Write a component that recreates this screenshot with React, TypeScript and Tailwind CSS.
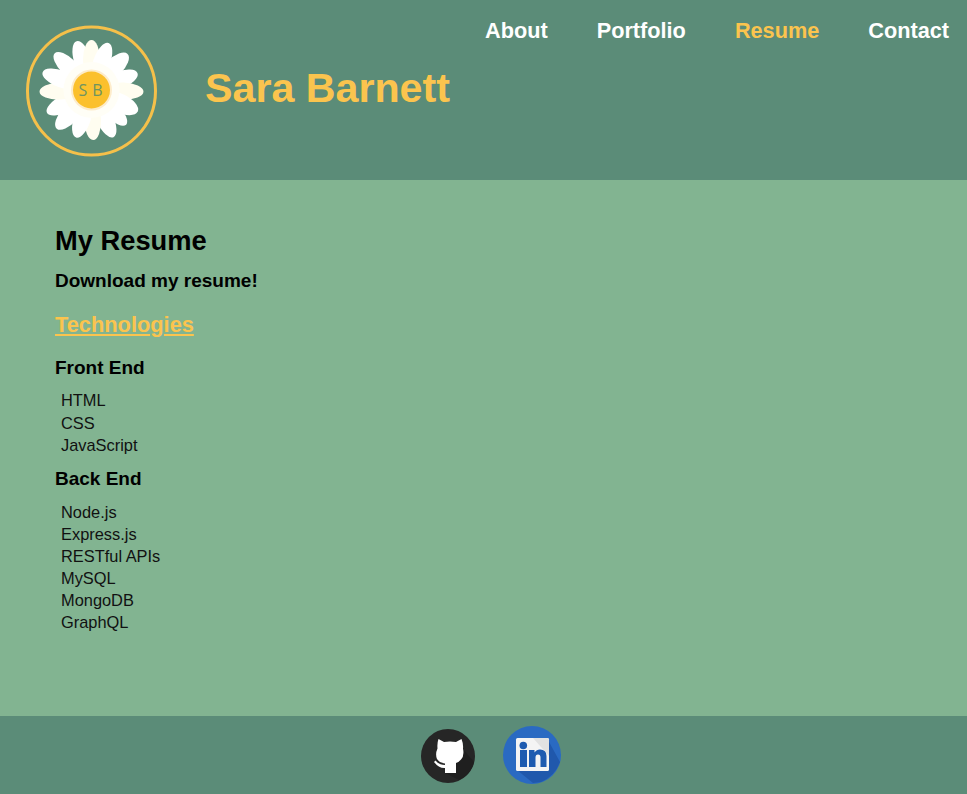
const petals = [
  [-17, 31, 8.5], [0, 30, 8.5], [20, 30, 8.5], [45, 31, 9], [70, 29, 8.5], [92, 32, 8.5], [115, 31, 9.5], [135, 29, 8],
  [155, 32, 8.5], [178, 30, 8.5], [198, 30, 8.5], [222, 32, 9], [243, 30, 8.5], [268, 32, 8.5], [290, 32, 8.5], [315, 32, 8.5],
];

function Logo() {
  return (
    <svg width="132" height="130" viewBox="0 0 132 130" className="shrink-0 overflow-visible">
      <circle cx="65.5" cy="65" r="64" fill="none" stroke="#f5c04a" strokeWidth="3" />
      {petals.map(([angle, dist, width], i) => (
        <ellipse
          key={i}
          cx="65.500"
          cy={64 - dist}
          rx={width}
          ry="20"
          fill={i % 4 === 1 ? "#fffdf0" : "#ffffff"}
          transform={`rotate(${angle} 65.500 64)`}
        />
      ))}
      <circle cx="65.500" cy="64" r="28" fill="#fffef6" />
      <circle cx="65.500" cy="64" r="20.500" fill="#fdeccb" />
      <circle cx="65.500" cy="64" r="18.500" fill="#fbc02d" />
      <text x="67" y="70" textAnchor="middle" fontSize="16" fill="#6f9460" letterSpacing="5" fontFamily="Open Sans, sans-serif">
        SB
      </text>
    </svg>
  );
}

function GithubIcon() {
  return (
    <svg width="55" height="56" viewBox="0 0 55 56" className="mt-[3px]">
      <circle cx="27" cy="27" r="27" fill="#262626" />
      <path d="M41 19 L53 33 Q50 46 38 51 L24 44 Z" fill="#1f1f1f" />
      <path
        d="M17.500 10 L23 13 Q29 12 35 13 L40.500 10 Q42.500 15 42 19.500 Q43.500 27 40 30.500 Q38 33 35 34 L35 44 L24 44 L24 39 Q18 39.500 13 33 L14.500 31.500 Q18 36 24 36 L24 34.500 Q18 33.500 16 30 Q14 25 16.500 19.500 Q16 14 17.500 10 Z"
        fill="#ffffff"
      />
    </svg>
  );
}

function LinkedinIcon() {
  return (
    <svg width="58" height="58" viewBox="0 0 58 58" className="-mt-[1px]">
      <circle cx="29" cy="29" r="29" fill="#2a6ac2" />
      <path d="M14 44 L45 14 L57 36 Q52 50 38 56 L30 57 Z" fill="#2058ac" />
      <rect x="13" y="12" width="33" height="33" rx="1.500" fill="#f4f4f4" />
      <path d="M30 12 H44.500 Q46 12 46 13.500 V30 Z" fill="#e2e2e2" />
      <circle cx="20.300" cy="19.500" r="3.800" fill="#1e5bb0" />
      <rect x="17" y="24" width="7" height="17" fill="#1e5bb0" />
      <path
        d="M26 24 H31.500 V26.500 Q33.500 23.500 37 23.500 Q43.500 23.500 43.500 30 V41 H37.500 V31.500 Q37.500 28.500 35 28.500 Q32.500 28.500 32.500 31.500 V41 H26 Z"
        fill="#1e5bb0"
      />
    </svg>
  );
}

const frontEnd = ["HTML", "CSS", "JavaScript"];
const backEnd = ["Node.js", "Express.js", "RESTful APIs", "MySQL", "MongoDB", "GraphQL"];

export default function App() {
  return (
    <div className="w-[967px] h-[794px] flex flex-col overflow-hidden bg-[#82b491] font-['Liberation_Sans',Arial,sans-serif] text-black">
      <header className="h-[180px] shrink-0 bg-[#5b8c78] flex items-start pl-[26px] pr-[18px]">
        <div className="pt-[26px]">
          <Logo />
        </div>
        <h1 className="ml-[47px] mt-[65px] text-[41.200px] leading-[46px] font-bold text-[#fbc44e]">Sara Barnett</h1>
        <nav className="ml-auto flex gap-[49px] pt-[18px] text-[21.700px] leading-[26px] font-bold text-white">
          <a>About</a>
          <a>Portfolio</a>
          <a className="text-[#fbc44e]">Resume</a>
          <a>Contact</a>
        </nav>
      </header>

      <main className="flex-1 pl-[55px] pt-[45px]">
        <h2 className="text-[27.300px] leading-[32px] font-bold">My Resume</h2>
        <p className="mt-[13px] text-[19px] leading-[22px] font-bold">Download my resume!</p>
        <a className="block mt-[21px] text-[21.800px] leading-[24px] font-bold text-[#fbc44e] underline">Technologies</a>
        <h3 className="mt-[20px] text-[19px] leading-[22px] font-bold">Front End</h3>
        <ul className="mt-[10px] pl-[6px] text-[16.400px] leading-[22.500px] text-[#111]">
          {frontEnd.map((item) => (
            <li key={item}>{item}</li>
          ))}
        </ul>
        <h3 className="mt-[11px] text-[19px] leading-[22px] font-bold">Back End</h3>
        <ul className="mt-[11px] pl-[6px] text-[16.400px] leading-[22.100px] text-[#111]">
          {backEnd.map((item) => (
            <li key={item}>{item}</li>
          ))}
        </ul>
      </main>

      <footer className="h-[78px] shrink-0 bg-[#5b8c78] flex items-center justify-center gap-[27px] pl-[15px]">
        <GithubIcon />
        <LinkedinIcon />
      </footer>
    </div>
  );
}
